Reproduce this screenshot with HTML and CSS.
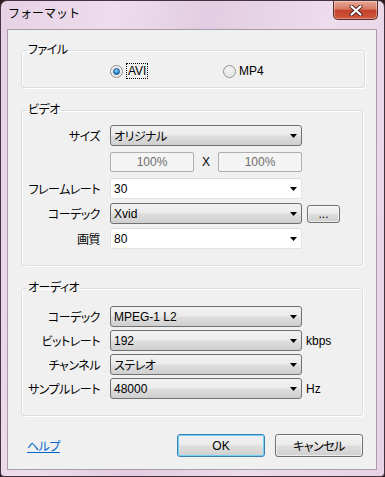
FILE: index.html
```html
<!DOCTYPE html>
<html lang="ja">
<head>
    <meta charset="UTF-8">
    <meta name="viewport" content="width=device-width, initial-scale=1.0">
    <title>フォーマット</title>
    <link rel="stylesheet" href="styles.css">
</head>
<body>
    <div class="window">
        <div class="titlebar">
            <span class="title">フォーマット</span>
            <button class="close" title="閉じる">
                <svg width="14" height="11" viewBox="0 0 14 11">
                    <path d="M2.5 1.5l9 8M11.5 1.5l-9 8" stroke="#4a2320" stroke-width="4" stroke-linecap="round"/>
                    <path d="M2.5 1.5l9 8M11.5 1.5l-9 8" stroke="#fff" stroke-width="2.2" stroke-linecap="round"/>
                </svg>
            </button>
        </div>

        <div class="client">
            <fieldset class="group group-file">
                <legend class="jp">ファイル</legend>
                <div class="radios">
                    <label class="radio radio-avi">
                        <span class="radio-mark"><span class="radio-dot"></span></span>
                        <span class="focus">AVI</span>
                    </label>
                    <label class="radio">
                        <span class="radio-mark"></span>
                        <span>MP4</span>
                    </label>
                </div>
            </fieldset>

            <fieldset class="group group-video">
                <legend class="jp">ビデオ</legend>
                <div class="rows rows-video">
                    <div class="row">
                        <span class="label jp">サイズ</span>
                        <div class="combo list"><span class="jp">オリジナル</span><svg class="arrow" width="7" height="4" viewBox="0 0 7 4"><path d="M0 0h7L3.5 4z"/></svg></div>
                    </div>
                    <div class="row row-scale">
                        <span class="label"></span>
                        <span class="scale-box">100%</span>
                        <span class="scale-x">X</span>
                        <span class="scale-box">100%</span>
                    </div>
                    <div class="row">
                        <span class="label jp">フレームレート</span>
                        <div class="combo edit"><span>30</span><svg class="arrow" width="7" height="4" viewBox="0 0 7 4"><path d="M0 0h7L3.5 4z"/></svg></div>
                    </div>
                    <div class="row">
                        <span class="label jp">コーデック</span>
                        <div class="combo list"><span>Xvid</span><svg class="arrow" width="7" height="4" viewBox="0 0 7 4"><path d="M0 0h7L3.5 4z"/></svg></div>
                        <button class="btn btn-more">...</button>
                    </div>
                    <div class="row">
                        <span class="label jp">画質</span>
                        <div class="combo edit"><span>80</span><svg class="arrow" width="7" height="4" viewBox="0 0 7 4"><path d="M0 0h7L3.5 4z"/></svg></div>
                    </div>
                </div>
            </fieldset>

            <fieldset class="group group-audio">
                <legend class="jp">オーディオ</legend>
                <div class="rows rows-audio">
                    <div class="row">
                        <span class="label jp">コーデック</span>
                        <div class="combo list"><span>MPEG-1 L2</span><svg class="arrow" width="7" height="4" viewBox="0 0 7 4"><path d="M0 0h7L3.5 4z"/></svg></div>
                    </div>
                    <div class="row">
                        <span class="label jp">ビットレート</span>
                        <div class="combo list"><span>192</span><svg class="arrow" width="7" height="4" viewBox="0 0 7 4"><path d="M0 0h7L3.5 4z"/></svg></div>
                        <span class="unit">kbps</span>
                    </div>
                    <div class="row">
                        <span class="label jp">チャンネル</span>
                        <div class="combo list"><span class="jp">ステレオ</span><svg class="arrow" width="7" height="4" viewBox="0 0 7 4"><path d="M0 0h7L3.5 4z"/></svg></div>
                    </div>
                    <div class="row">
                        <span class="label jp">サンプルレート</span>
                        <div class="combo list"><span>48000</span><svg class="arrow" width="7" height="4" viewBox="0 0 7 4"><path d="M0 0h7L3.5 4z"/></svg></div>
                        <span class="unit">Hz</span>
                    </div>
                </div>
            </fieldset>

            <div class="footer">
                <a class="help jp" href="#">ヘルプ</a>
                <button class="btn btn-ok">OK</button>
                <button class="btn btn-cancel jp">キャンセル</button>
            </div>
        </div>
    </div>
</body>
</html>
```

FILE: styles.css
```css
* {
    box-sizing: border-box;
}

body {
    margin: 0;
    background-color: #2c1b20;
    font-family: "Liberation Sans", "Noto Sans CJK JP", sans-serif;
    font-size: 12px;
    font-feature-settings: "palt";
    color: #000;
}

/* Meiryo UI kana are narrower than Noto's */
.jp {
    letter-spacing: -0.5px;
}

.window {
    width: 385px;
    height: 477px;
    display: flex;
    flex-direction: column;
    border: 1px solid #45323f;
    border-radius: 7px 7px 4px 4px;
    background: linear-gradient(100deg, #e6d1e4 0%, #eedded 25%, #e2cce1 45%, #eddcec 70%, #e7d3e5 100%);
}

.titlebar {
    height: 28px;
    flex-shrink: 0;
    display: flex;
    justify-content: space-between;
    align-items: flex-start;
}

.title {
    padding: 5px 0 0 7px;
    font-size: 12px;
    line-height: 16px;
    font-feature-settings: normal;
}

.close {
    width: 45px;
    height: 19px;
    margin-right: 6px;
    padding: 0;
    display: flex;
    align-items: center;
    justify-content: center;
    border: 1px solid #5c2b27;
    border-top: none;
    border-radius: 0 0 5px 5px;
    background: linear-gradient(#e8a898, #d77862 45%, #c4412c 52%, #d0583e 100%);
    box-shadow: inset 0 0 0 1px rgba(255, 255, 255, 0.35);
}

.client {
    flex: 1;
    margin: 0 7px 6px 6px;
    padding: 13px 0 0 13px;
    border: 1px solid #a89ca8;
    background-color: #f0f0f0;
}

/* group boxes */
.group {
    margin: 0;
    padding: 0;
    min-width: 0;
    border: 1px solid #d5dfe5;
    border-radius: 3px;
    box-shadow: inset 1px 1px 0 #fff, 1px 1px 0 #fff;
}

.group legend {
    margin-left: 5px;
    padding: 0 1px;
    line-height: 15px;
}

.group-file {
    width: 344px;
    padding: 5px 0 8px;
}

.group-video {
    width: 342px;
    margin-top: 15px;
    padding: 7px 0 16px;
}

.group-audio {
    width: 342px;
    margin-top: 15px;
    padding: 10px 0 16px;
}

.radios {
    display: flex;
    align-items: center;
    padding-left: 88px;
    height: 16px;
}

.radio {
    display: flex;
    align-items: center;
    gap: 3px;
}

.radio-avi {
    width: 113px;
}

.radio-mark {
    width: 13px;
    height: 13px;
    display: flex;
    align-items: center;
    justify-content: center;
    border: 1px solid #8e8f8f;
    border-radius: 50%;
    background: radial-gradient(circle at 50% 40%, #f8f8f8, #dcdcdc 80%);
    box-shadow: inset 0 0 0 1px #f4f4f4;
}

.radio-dot {
    width: 7px;
    height: 7px;
    border-radius: 50%;
    background: radial-gradient(circle at 45% 35%, #a6e0ff, #2a8ad4 55%, #0c4c8c);
    border: 1px solid #1d5a8f;
}

.focus {
    border: 1px dotted #000;
    padding: 0 1px;
    line-height: 14px;
}

/* form rows */
.rows {
    display: flex;
    flex-direction: column;
    gap: 4px;
}

.rows-audio {
    gap: 3px;
}

.row {
    display: flex;
    align-items: center;
}

.label {
    width: 88px;
    padding-right: 10px;
    text-align: right;
    flex-shrink: 0;
}

.combo {
    width: 192px;
    height: 21px;
    display: flex;
    align-items: center;
    justify-content: space-between;
    padding: 0 4px 0 3px;
    border-radius: 3px;
}

.combo.list {
    border: 1px solid #707070;
    background: linear-gradient(#f2f2f2, #ebebeb 45%, #dddddd 55%, #cfcfcf);
}

.combo.edit {
    border: 1px solid #e2e3ea;
    border-top-color: #dadbe2;
    border-radius: 2px;
    background-color: #fff;
}

.arrow {
    fill: #000;
}

.row-scale {
    margin: 2px 0;
}

.scale-box {
    width: 84px;
    height: 20px;
    line-height: 18px;
    text-align: center;
    color: #6d6d6d;
    border: 1px solid #afafaf;
    border-radius: 2px;
    background-color: #f4f4f4;
}

.scale-x {
    width: 24px;
    text-align: center;
}

.unit {
    margin-left: 4px;
}

/* buttons */
.btn {
    font-family: inherit;
    font-size: 12px;
    font-feature-settings: "palt";
    color: #000;
    padding: 0;
    border: 1px solid #707070;
    border-radius: 3px;
    background: linear-gradient(#f2f2f2, #ebebeb 45%, #dddddd 55%, #cfcfcf);
    box-shadow: inset 0 0 0 1px rgba(255, 255, 255, 0.6);
}

.btn-more {
    width: 33px;
    height: 18px;
    margin-left: 5px;
    line-height: 10px;
}

.footer {
    display: flex;
    align-items: center;
    margin-top: 18px;
    padding: 0 13px 0 6px;
}

.help {
    color: #0066cc;
    margin-right: auto;
}

.btn-ok,
.btn-cancel {
    width: 88px;
    height: 23px;
}

.btn-ok {
    border-color: #3c7fb1;
    box-shadow: inset 0 0 0 1px #6fd3f6;
}

.btn-cancel {
    margin-left: 10px;
}
```
